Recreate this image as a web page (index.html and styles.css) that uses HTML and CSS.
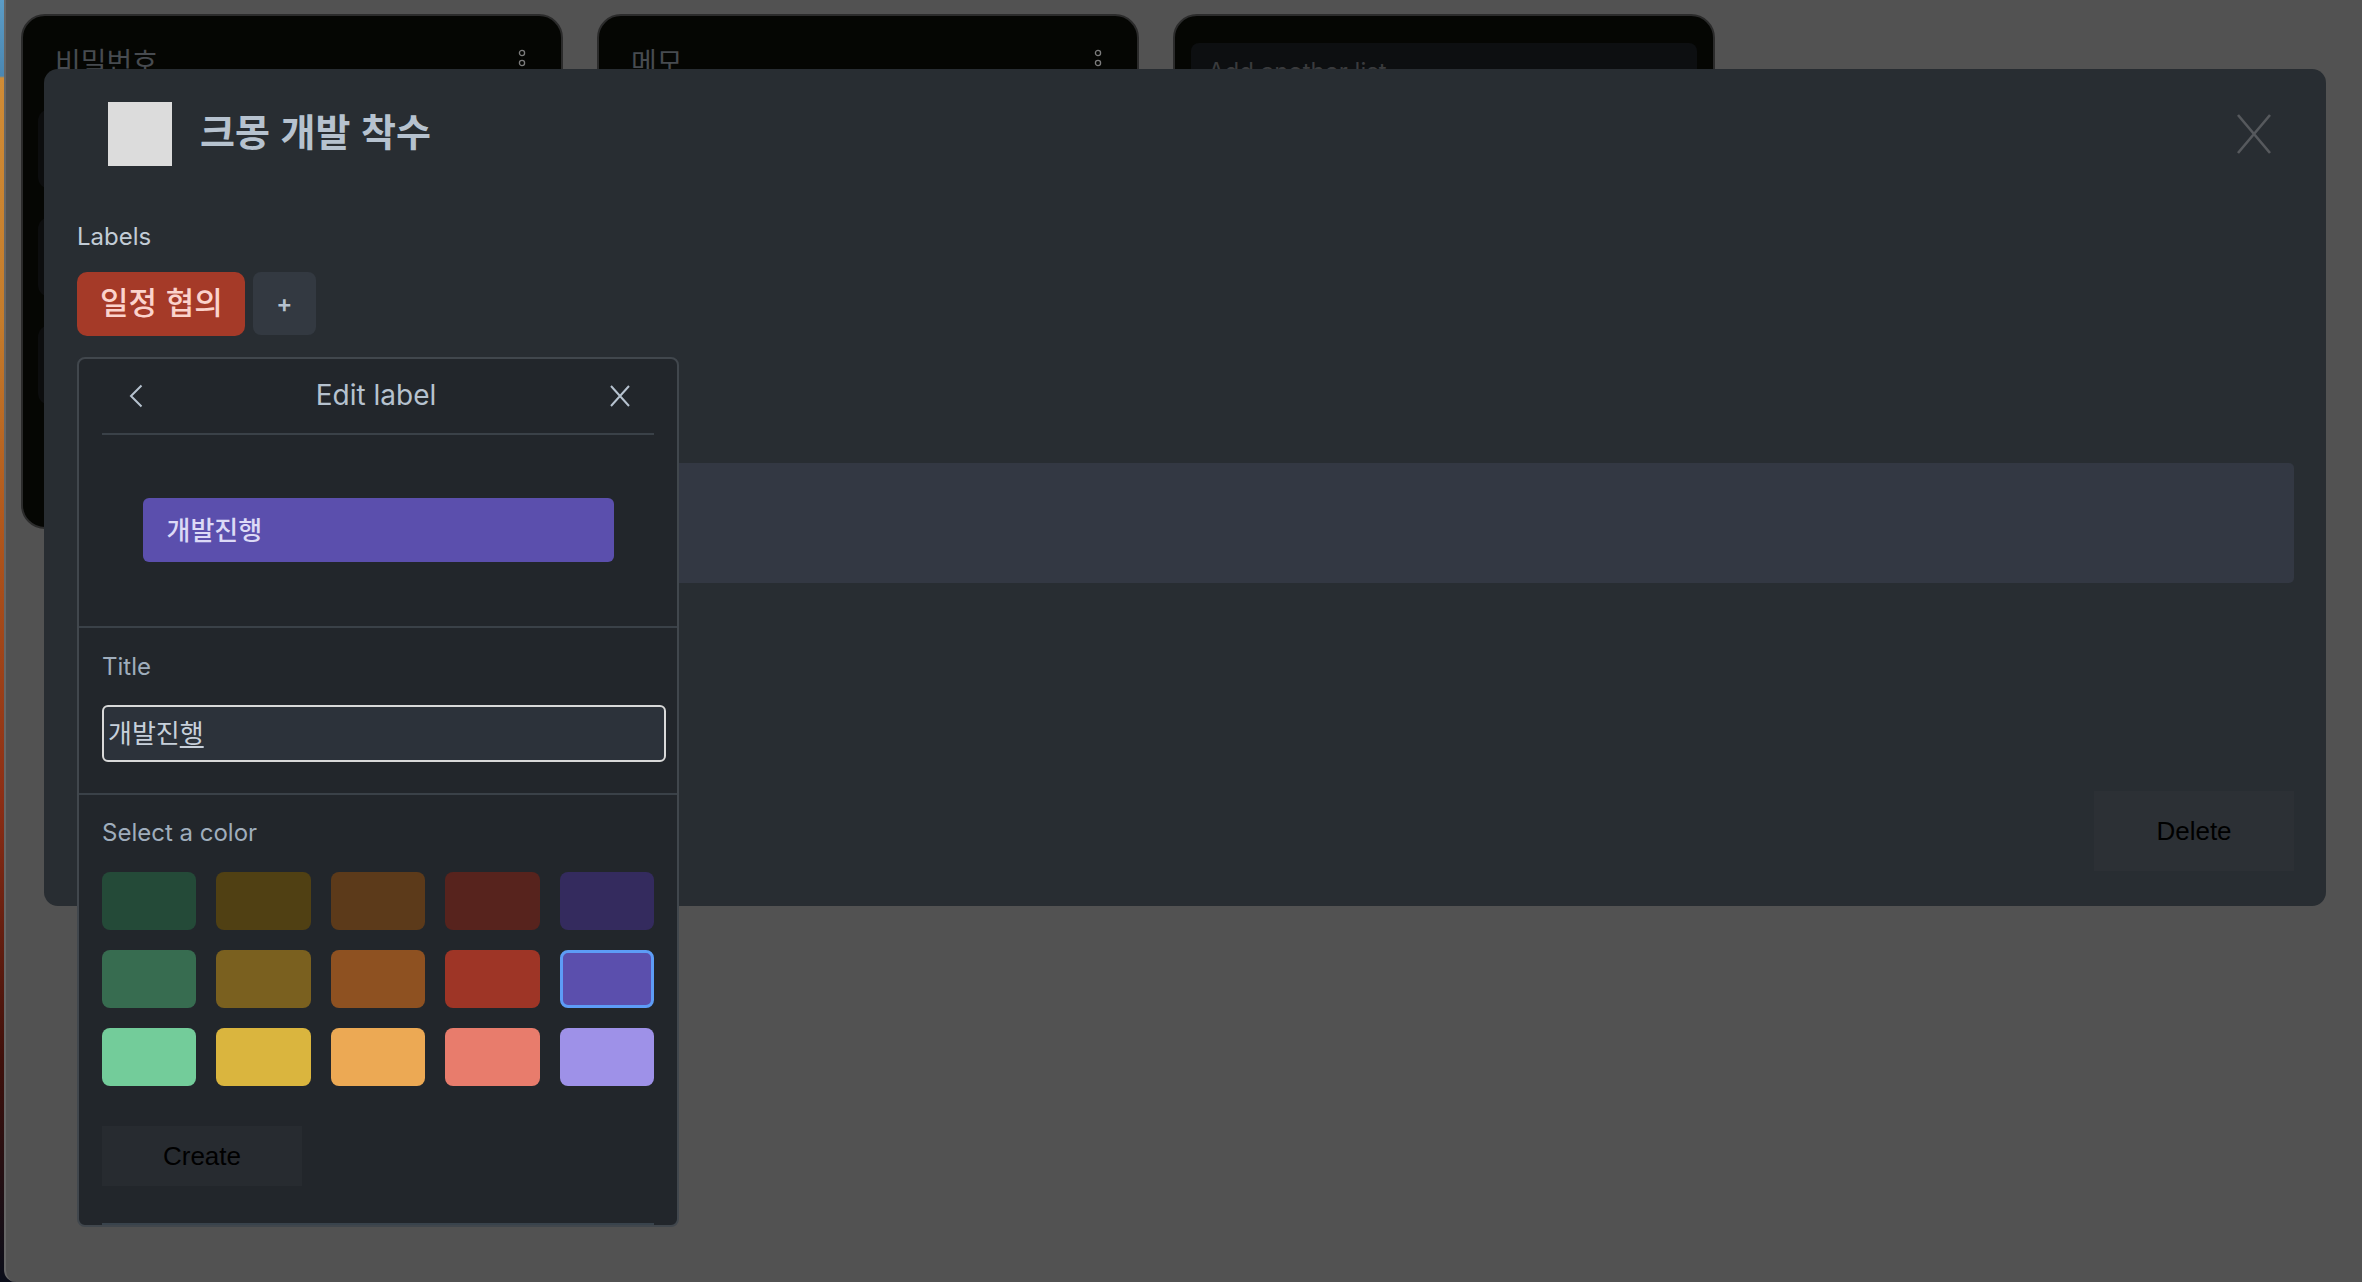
FILE: index.html
```html
<!DOCTYPE html>
<html lang="ko">
<head>
<meta charset="utf-8">
<title>크몽 개발 착수</title>
<link rel="stylesheet" href="styles.css">
</head>
<body>
<div class="app">
  <div class="workspace">
    <main class="board">
      <section class="list list-tall">
        <header class="list-head">
          <h2 class="list-title">비밀번호</h2>
          <svg class="dots" width="8" height="28" viewBox="0 0 8 28"><circle cx="4" cy="4" r="2.6"/><circle cx="4" cy="14" r="2.6"/><circle cx="4" cy="24" r="2.6"/></svg>
        </header>
        <div class="list-cards">
          <div class="list-card"></div>
          <div class="list-card"></div>
          <div class="list-card"></div>
        </div>
      </section>
      <section class="list list-tall">
        <header class="list-head">
          <h2 class="list-title">메모</h2>
          <svg class="dots" width="8" height="28" viewBox="0 0 8 28"><circle cx="4" cy="4" r="2.6"/><circle cx="4" cy="14" r="2.6"/><circle cx="4" cy="24" r="2.6"/></svg>
        </header>
      </section>
      <section class="list list-add">
        <div class="add-list">Add another list</div>
      </section>
    </main>
  </div>

  <div class="modal">
    <header class="modal-head">
      <div class="cover"></div>
      <h1 class="modal-title">크몽 개발 착수</h1>
    </header>
    <svg class="modal-close" width="36" height="40" viewBox="0 0 36 40"><path d="M2 1 L34 39 M34 1 L2 39"/></svg>

    <section class="labels">
      <h3 class="section-label">Labels</h3>
      <div class="chips">
        <span class="chip chip-red">일정 협의</span>
        <button class="chip-add">+</button>
      </div>

      <div class="popover">
        <div class="pop-head">
          <button class="pop-icon"><svg width="14" height="24" viewBox="0 0 14 24"><path d="M12.5 1.5 L2 12 L12.5 22.5"/></svg></button>
          <span class="pop-title">Edit label</span>
          <button class="pop-icon"><svg width="20" height="22" viewBox="0 0 20 22"><path d="M1 1 L19 21 M19 1 L1 21"/></svg></button>
        </div>
        <div class="pop-preview">
          <div class="preview-chip">개발진행</div>
        </div>
        <div class="pop-field">
          <div class="field-label">Title</div>
          <div class="text-input">개발진<u>행</u></div>
        </div>
        <div class="pop-colors">
          <div class="field-label">Select a color</div>
          <div class="swatches">
            <span class="sw" style="background:#244a38"></span>
            <span class="sw" style="background:#504013"></span>
            <span class="sw" style="background:#5c3a1a"></span>
            <span class="sw" style="background:#57231d"></span>
            <span class="sw" style="background:#342b5e"></span>
            <span class="sw" style="background:#376c50"></span>
            <span class="sw" style="background:#7a601f"></span>
            <span class="sw" style="background:#8e5121"></span>
            <span class="sw" style="background:#9e3526"></span>
            <span class="sw sw-selected" style="background:#5b4fad"></span>
            <span class="sw" style="background:#73cc9a"></span>
            <span class="sw" style="background:#dab53e"></span>
            <span class="sw" style="background:#eca954"></span>
            <span class="sw" style="background:#e87c6c"></span>
            <span class="sw" style="background:#9e91e8"></span>
          </div>
          <button class="btn-create">Create</button>
        </div>
        <div class="pop-rule"></div>
      </div>
    </section>

    <section class="description">
      <h3 class="section-label">Description</h3>
      <div class="desc-box"></div>
    </section>

    <div class="modal-actions">
      <button class="btn-delete">Delete</button>
    </div>
  </div>
</div>
</body>
</html>
```
FILE: styles.css
```css
* { box-sizing: border-box; margin: 0; padding: 0; }

html, body {
  width: 2362px;
  height: 1282px;
  overflow: hidden;
}

body {
  font-family: Inter, "Noto Sans CJK KR", sans-serif;
  background: #0a0d18;
}

button { border: none; cursor: pointer; }

.app {
  position: relative;
  width: 2362px;
  height: 1282px;
  display: flex;
  background: linear-gradient(to bottom, #5b9cc6 0, #4a87b2 76px, #d08c36 78px, #c47c2c 320px, #b2581c 520px, #8c2e15 800px, #3f100b 1060px, #0b0e1a 1282px);
}

.workspace {
  flex: 1;
  margin-left: 4px;
  background: #525252;
  border-left: 2px solid #666666;
  border-bottom-left-radius: 12px;
  padding: 14px 0 0 15px;
}

/* ---------- board (dimmed, behind modal) ---------- */
.board {
  display: flex;
  align-items: flex-start;
  gap: 34px;
}

.list {
  width: 542px;
  background: #050603;
  border: 2px solid #2b2b2b;
  border-radius: 24px;
}

.list-tall { height: 515px; padding: 0 15px; }

.list-head {
  display: flex;
  justify-content: space-between;
  align-items: flex-start;
  padding: 27px 20px 0 17px;
}

.list-title {
  font-family: "Noto Sans CJK KR", sans-serif;
  font-weight: 400;
  font-size: 28px;
  line-height: 36px;
  color: #474b50;
}

.dots {
  margin-top: 6px;
  fill: none;
  stroke: #7c7c7c;
  stroke-width: 1.3;
}

.list-cards {
  display: flex;
  flex-direction: column;
  gap: 28px;
  margin-top: 30px;
}

.list-card {
  height: 80px;
  border-radius: 12px;
  background: #0c0d0e;
}

.list-add {
  height: 200px;
  padding: 27px 16px;
}

.add-list {
  height: 90px;
  border-radius: 8px;
  background: #0d0f11;
  padding: 14px 17px;
  font-size: 24px;
  line-height: 30px;
  color: #3a3b3d;
}

/* ---------- modal ---------- */
.modal {
  position: absolute;
  left: 44px;
  top: 69px;
  width: 2282px;
  height: 837px;
  background: #282d32;
  border-radius: 14px;
  padding: 33px 32px 35px 33px;
}

.modal-head {
  display: flex;
  align-items: center;
  gap: 28px;
  padding-left: 31px;
  height: 64px;
}

.cover {
  width: 64px;
  height: 64px;
  background: #dcdcdc;
}

.modal-title {
  font-family: "Noto Sans CJK KR", sans-serif;
  font-size: 38px;
  font-weight: 700;
  line-height: 44px;
  padding-bottom: 9px;
  color: #b6c2cf;
}

.modal-close {
  position: absolute;
  top: 45px;
  right: 54px;
  fill: none;
  stroke: #56595d;
  stroke-width: 2.6;
}

.section-label {
  font-size: 24px;
  font-weight: 400;
  line-height: 30px;
  color: #c2ccd6;
}

.labels {
  position: relative;
  margin-top: 56px;
}

.chips {
  display: flex;
  gap: 8px;
  margin-top: 20px;
}

.chip {
  height: 64px;
  padding: 0 22px 0 23px;
  border-radius: 10px;
  font-family: "Noto Sans CJK KR", sans-serif;
  font-size: 31px;
  font-weight: 500;
  line-height: 58px;
}

.chip-red {
  background: #a53a28;
  color: #fbd3cc;
}

.chip-add {
  width: 63px;
  height: 63px;
  border-radius: 8px;
  background: #333941;
  color: #b6c2cf;
  font-family: Inter, sans-serif;
  font-size: 24px;
  font-weight: 600;
}

/* ---------- popover ---------- */
.popover {
  position: absolute;
  top: 135px;
  left: 0;
  width: 602px;
  height: 870px;
  background: #22262b;
  border: 2px solid #41474d;
  border-radius: 8px;
  overflow: hidden;
  z-index: 2;
}

.pop-head {
  display: flex;
  align-items: center;
  height: 76px;
  margin: 0 23px;
  border-bottom: 2px solid #3a4148;
}

.pop-icon {
  width: 68px;
  height: 60px;
  background: transparent;
  display: flex;
  align-items: center;
  justify-content: center;
}

.pop-icon svg {
  fill: none;
  stroke: #b6c2cf;
  stroke-width: 2;
}

.pop-title {
  flex: 1;
  text-align: center;
  font-size: 28px;
  line-height: 36px;
  color: #b6c2cf;
  padding: 0 4px 2px 0;
}

.pop-preview {
  padding: 63px 0 64px;
  border-bottom: 2px solid #3a4148;
  display: flex;
  justify-content: center;
}

.preview-chip {
  width: 471px;
  height: 64px;
  border-radius: 6px;
  background: #5b4fad;
  padding-left: 24px;
  font-family: "Noto Sans CJK KR", sans-serif;
  font-size: 26px;
  font-weight: 500;
  line-height: 62px;
  color: #dcdaf6;
}

.pop-field {
  padding: 24px 23px 31px;
  border-bottom: 2px solid #3a4148;
}

.field-label {
  font-size: 24px;
  line-height: 30px;
  color: #9fadbc;
}

.text-input {
  width: 564px;
  height: 57px;
  margin-top: 23px;
  border: 2px solid #d9d9d9;
  border-radius: 6px;
  background: #2c323a;
  padding-left: 4px;
  font-family: "Noto Sans CJK KR", sans-serif;
  font-size: 26px;
  line-height: 50px;
  color: #c7d0da;
}

.text-input u {
  text-decoration-thickness: 2px;
  text-underline-offset: 3px;
}

.pop-colors {
  padding: 23px 23px 37px;
}

.swatches {
  display: grid;
  grid-template-columns: repeat(5, 1fr);
  grid-auto-rows: 58px;
  column-gap: 20px;
  row-gap: 20px;
  margin-top: 24px;
}

.sw {
  border-radius: 8px;
}

.sw-selected {
  border: 3px solid #5d9cf6;
}

.btn-create {
  display: block;
  width: 200px;
  height: 60px;
  margin-top: 40px;
  background: #272b30;
  font-family: "Liberation Sans", Arial, sans-serif;
  font-size: 26px;
  color: #000000;
}

.pop-rule {
  height: 2px;
  margin: 0 23px;
  background: #39434c;
}

/* ---------- description + actions ---------- */
.description {
  margin-top: 64px;
}

.desc-box {
  height: 120px;
  margin-top: 33px;
  border-radius: 5px;
  background: #333843;
}

.modal-actions {
  display: flex;
  justify-content: flex-end;
  margin-top: 208px;
}

.btn-delete {
  width: 200px;
  height: 80px;
  background: #2c3035;
  font-family: "Liberation Sans", Arial, sans-serif;
  font-size: 26px;
  color: #000000;
}
```
